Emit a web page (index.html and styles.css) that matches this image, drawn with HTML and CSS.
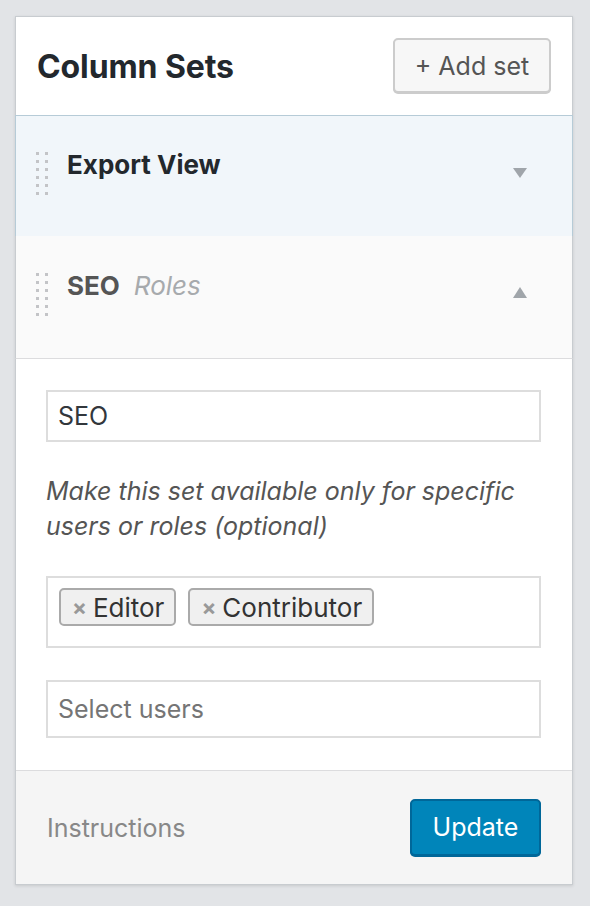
FILE: index.html
```html
<!DOCTYPE html>
<html lang="en">
<head>
<meta charset="utf-8">
<title>Column Sets</title>
<link rel="stylesheet" href="styles.css">
</head>
<body>
<div class="card">
  <div class="card-header">
    <h2 class="card-title">Column Sets</h2>
    <button class="btn-secondary" type="button">+ Add set</button>
  </div>

  <div class="set-row set-row--active">
    <svg class="handle" width="12" height="44" viewBox="0 0 12 44" aria-hidden="true">
      <g fill="#c3c4c7">
        <rect x="0" y="0" width="3" height="3"/><rect x="9" y="0" width="3" height="3"/>
        <rect x="0" y="8" width="3" height="3"/><rect x="9" y="8" width="3" height="3"/>
        <rect x="0" y="16" width="3" height="3"/><rect x="9" y="16" width="3" height="3"/>
        <rect x="0" y="24" width="3" height="3"/><rect x="9" y="24" width="3" height="3"/>
        <rect x="0" y="32" width="3" height="3"/><rect x="9" y="32" width="3" height="3"/>
        <rect x="0" y="40" width="3" height="3"/><rect x="9" y="40" width="3" height="3"/>
      </g>
    </svg>
    <div class="set-title"><strong class="set-name set-name--dark">Export View</strong></div>
    <svg class="arrow arrow--down" width="14" height="10" viewBox="0 0 14 10" aria-hidden="true">
      <path d="M0 0 L14 0 L7 10 Z" fill="#a0a5aa"/>
    </svg>
  </div>

  <div class="set-row set-row--open">
    <svg class="handle" width="12" height="44" viewBox="0 0 12 44" aria-hidden="true">
      <g fill="#c3c4c7">
        <rect x="0" y="0" width="3" height="3"/><rect x="9" y="0" width="3" height="3"/>
        <rect x="0" y="8" width="3" height="3"/><rect x="9" y="8" width="3" height="3"/>
        <rect x="0" y="16" width="3" height="3"/><rect x="9" y="16" width="3" height="3"/>
        <rect x="0" y="24" width="3" height="3"/><rect x="9" y="24" width="3" height="3"/>
        <rect x="0" y="32" width="3" height="3"/><rect x="9" y="32" width="3" height="3"/>
        <rect x="0" y="40" width="3" height="3"/><rect x="9" y="40" width="3" height="3"/>
      </g>
    </svg>
    <div class="set-title"><strong class="set-name">SEO</strong><em class="set-meta">Roles</em></div>
    <svg class="arrow arrow--up" width="14" height="11" viewBox="0 0 14 11" aria-hidden="true">
      <path d="M7 0 L14 11 L0 11 Z" fill="#a0a5aa"/>
    </svg>
  </div>

  <div class="set-body">
    <div class="field">SEO</div>
    <p class="help">Make this set available only for specific users or roles (optional)</p>
    <div class="tags">
      <span class="tag"><span class="tag-x">×</span>Editor</span>
      <span class="tag"><span class="tag-x">×</span>Contributor</span>
    </div>
    <div class="field field--placeholder">Select users</div>
  </div>

  <div class="set-footer">
    <span class="footer-link">Instructions</span>
    <button class="btn-primary" type="button">Update</button>
  </div>
</div>
</body>
</html>
```

FILE: styles.css
```css
* { box-sizing: border-box; }

html, body { margin: 0; padding: 0; }

body {
  background: #e2e4e7;
  font-family: Inter, "Noto Sans", "Liberation Sans", sans-serif;
  padding: 16px 0 0 15px;
  height: 906px;
  overflow: hidden;
}

.card {
  width: 558px;
  background: #fff;
  border: 1px solid #c8ccd0;
  box-shadow: 0 1px 3px rgba(0, 0, 0, 0.12);
}

.card-header {
  height: 98px;
  display: flex;
  align-items: center;
  justify-content: space-between;
  padding: 0 21px 0 21px;
}

.card-title {
  margin: 0;
  font-size: 32px;
  font-weight: 700;
  color: #23282d;
  letter-spacing: -0.1px;
}

.btn-secondary {
  font-family: inherit;
  font-size: 25px;
  color: #555;
  background: #f7f7f7;
  border: 2px solid #ccc;
  border-radius: 5px;
  box-shadow: 0 1px 0 #ccc;
  width: 158px;
  height: 55px;
  margin-top: -1px;
  padding: 0;
}

.set-row {
  height: 122px;
  display: flex;
  align-items: flex-start;
  padding: 36px 45px 0 20px;
  margin: 0 -1px;
}

.set-row--active {
  background: #f1f6fa;
  border: 1px solid #b6cbd7;
}

.set-row--open {
  background: #fafafa;
  border-bottom: 1px solid #dcdcde;
  border-right: 1px solid #c8ccd0;
  border-left: 1px solid #c8ccd0;
  margin-top: -1px;
  height: 123px;
  padding-top: 37px;
}

.handle { flex: none; }

.set-title {
  flex: 1;
  margin-left: 19px;
  margin-top: -2px;
  line-height: 30px;
  font-size: 26px;
}

.set-name { font-weight: 700; color: #555; }
.set-name--dark { color: #23282d; }

.set-meta {
  font-style: italic;
  color: #a7aaad;
  margin-left: 14px;
}

.arrow { flex: none; }
.arrow--down { margin-top: 16px; }
.arrow--up { margin-top: 14px; }

.set-body {
  padding: 31px 31px 32px 30px;
}

.field {
  height: 52px;
  border: 2px solid #ddd;
  padding: 0 10px;
  display: flex;
  align-items: center;
  font-size: 25px;
  color: #32373c;
  background: #fff;
}

.field--placeholder {
  height: 58px;
  color: #757575;
  margin-top: 32px;
}

.help {
  margin: 32px 0 0;
  font-size: 25px;
  line-height: 35px;
  font-style: italic;
  color: #555;
}

.tags {
  margin-top: 32px;
  height: 72px;
  border: 2px solid #ddd;
  padding: 10px 11px;
  display: flex;
  align-items: flex-start;
  gap: 12px;
}

.tag {
  display: inline-flex;
  align-items: center;
  height: 38px;
  padding: 0 10px 0 11px;
  background: #f0f0f0;
  border: 2px solid #aaa;
  border-radius: 5px;
  font-size: 26px;
  color: #333;
}

.tag-x {
  font-weight: 700;
  color: #999;
  font-size: 22px;
  margin-right: 6px;
}

.set-footer {
  height: 114px;
  background: #f5f5f5;
  border-top: 1px solid #dcdcde;
  display: flex;
  align-items: center;
  justify-content: space-between;
  padding: 0 31px;
}

.footer-link {
  font-size: 25px;
  color: #888;
}

.btn-primary {
  font-family: inherit;
  font-size: 25px;
  color: #fff;
  background: #0085ba;
  border: 2px solid #006799;
  border-radius: 5px;
  box-shadow: 0 1px 0 #006799;
  width: 131px;
  height: 57px;
  padding: 0;
  margin-top: -1px;
}
```
